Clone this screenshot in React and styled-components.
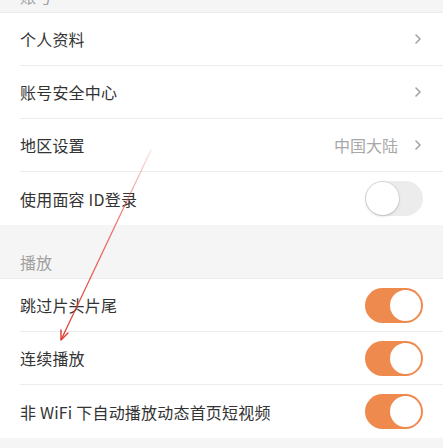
import React from 'react';
import styled, { createGlobalStyle } from 'styled-components';

const GlobalStyle = createGlobalStyle`
  html, body {
    margin: 0;
    padding: 0;
    background: #f5f5f5;
  }
  body {
    font-family: "Noto Sans CJK SC", "Noto Sans", sans-serif;
    -webkit-font-smoothing: antialiased;
  }
`;

const accountRows = [
  { label: '个人资料', type: 'link' },
  { label: '账号安全中心', type: 'link' },
  { label: '地区设置', type: 'link', value: '中国大陆' },
  { label: '使用面容 ID登录', type: 'switch', on: false },
];

const playRows = [
  { label: '跳过片头片尾', type: 'switch', on: true },
  { label: '连续播放', type: 'switch', on: true },
  { label: '非 WiFi 下自动播放动态首页短视频', type: 'switch', on: true },
];

const Chevron = () => (
  <svg width="8" height="12" viewBox="0 0 8 12">
    <polyline points="2,2 6,6 2,10" fill="none" stroke="#a3a3a3" strokeWidth="1.6" strokeLinecap="round" strokeLinejoin="round" />
  </svg>
);

const SettingRow = ({ row, last }) => (
  <Row>
    <RowInner last={last}>
      <Label>{row.label}</Label>
      {row.type === 'link' ? (
        <Trailing>
          {row.value && <Value>{row.value}</Value>}
          <Chevron />
        </Trailing>
      ) : (
        <Switch on={row.on}>
          <Knob on={row.on} />
        </Switch>
      )}
    </RowInner>
  </Row>
);

const Section = ({ title, rows, clipped }) => (
  <>
    <SectionHeader clipped={clipped}>
      <HeaderText>{title}</HeaderText>
    </SectionHeader>
    <Group>
      {rows.map((r, i) => (
        <SettingRow key={r.label} row={r} last={i === rows.length - 1} />
      ))}
    </Group>
  </>
);

const App = () => (
  <>
    <GlobalStyle />
    <Page>
      <Section title="账号" rows={accountRows} clipped />
      <Section title="播放" rows={playRows} />
      <SectionHeader clipped />
      {/* annotation arrow drawn over the screenshot */}
      <Annotation width="443" height="448" viewBox="0 0 443 448">
        <defs>
          <linearGradient id="fade" x1="150" y1="150" x2="61" y2="340" gradientUnits="userSpaceOnUse">
            <stop offset="0" stopColor="#e8453c" stopOpacity="0.15" />
            <stop offset="0.35" stopColor="#e8453c" stopOpacity="0.7" />
            <stop offset="1" stopColor="#e03a30" stopOpacity="1" />
          </linearGradient>
        </defs>
        <line x1="151" y1="150" x2="61" y2="340" stroke="url(#fade)" strokeWidth="1.3" />
        <polyline points="61,330 61,340 68,333" fill="none" stroke="#e03a30" strokeWidth="1.4" strokeLinecap="round" strokeLinejoin="round" />
      </Annotation>
    </Page>
  </>
);

export default App;

const Page = styled.div`
  position: relative;
  width: 443px;
  height: 448px;
  overflow: hidden;
  background: #f5f5f5;
`;

const SectionHeader = styled.div`
  display: flex;
  align-items: flex-end;
  height: ${({ clipped }) => (clipped ? '13px' : '54px')};
  padding: 0 20px 6px;
  box-sizing: border-box;
  overflow: hidden;
  border-bottom: 1px solid #ececec;
`;

const HeaderText = styled.span`
  font-size: 16px;
  line-height: 20px;
  color: #a0a0a0;
  white-space: nowrap;
`;

const Group = styled.div`
  background: #ffffff;
`;

const Row = styled.div`
  padding-left: 20px;
`;

const RowInner = styled.div`
  display: flex;
  align-items: center;
  justify-content: space-between;
  height: 53px;
  box-sizing: border-box;
  padding-right: 20px;
  border-bottom: ${({ last }) => (last ? 'none' : '1px solid #ececec')};
`;

const Label = styled.span`
  font-size: 16px;
  color: #333333;
  letter-spacing: 0.2px;
`;

const Trailing = styled.div`
  display: flex;
  align-items: center;
  gap: 16px;
  padding-right: 1px;
`;

const Value = styled.span`
  font-size: 16px;
  color: #a8a8a8;
`;

const Switch = styled.div`
  position: relative;
  width: 58px;
  height: 35px;
  border-radius: 18px;
  box-sizing: border-box;
  background: ${({ on }) => (on ? '#ee8a4e' : '#ececec')};
`;

const Knob = styled.div`
  position: absolute;
  top: ${({ on }) => (on ? '2px' : '1px')};
  left: ${({ on }) => (on ? '25px' : '1px')};
  width: ${({ on }) => (on ? '31px' : '33px')};
  height: ${({ on }) => (on ? '31px' : '33px')};
  border-radius: 50%;
  background: #ffffff;
  box-shadow: ${({ on }) => (on ? 'none' : '0 1px 3px rgba(0,0,0,0.18), 0 0 0 1px rgba(0,0,0,0.05)')};
`;

const Annotation = styled.svg`
  position: absolute;
  left: 0;
  top: 0;
  pointer-events: none;
`;
